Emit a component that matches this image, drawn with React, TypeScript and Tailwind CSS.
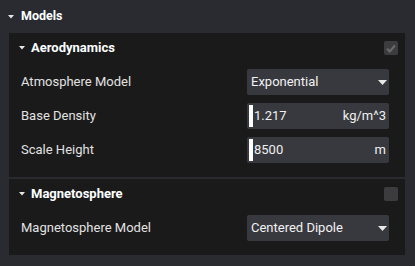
const Arrow = () => (
  <svg width="6" height="4" viewBox="0 0 6 4" className="shrink-0">
    <polygon points="0,0 6,0 3,3.5" fill="#e6e6e6" />
  </svg>
);

const Caret = () => (
  <svg width="9" height="5" viewBox="0 0 9 5" className="shrink-0">
    <polygon points="0,0 9,0 4.5,5" fill="#e8e8e8" />
  </svg>
);

const Check = ({ checked }: { checked: boolean }) => (
  <div className="w-[14px] h-[14px] rounded-[2px] bg-[#3c3c3f] flex items-center justify-center">
    {checked && (
      <svg width="10" height="9" viewBox="0 0 10 9">
        <polyline
          points="1,4.8 3.8,7.4 9,1.4"
          fill="none"
          stroke="#6a6a6c"
          strokeWidth="2.2"
        />
      </svg>
    )}
  </div>
);

const Select = ({ value }: { value: string }) => (
  <div className="w-[142px] h-[26px] bg-[#38393e] rounded-[2px] flex items-center justify-between pl-[4px] pr-[2px] text-[13px] text-[#f2f2f2]">
    {value}
    <Caret />
  </div>
);

const NumField = ({ value, unit }: { value: string; unit: string }) => (
  <div className="w-[142px] h-[26px] bg-[#38393e] rounded-[2px] flex items-center pl-[2px] pr-[3px] text-[13px] text-[#f0f0f0]">
    <div className="w-[4px] h-[22px] bg-white" />
    <span className="ml-[1px]">{value}</span>
    <span className="ml-auto">{unit}</span>
  </div>
);

const Row = ({ label, children }: { label: string; children: React.ReactNode }) => (
  <div className="h-[26px] flex items-center justify-between pl-[12px] pr-[16px]">
    <span className="text-[13px] text-[#e2e2e2]">{label}</span>
    {children}
  </div>
);

const Section = ({
  title,
  checked,
  children,
}: {
  title: string;
  checked: boolean;
  children: React.ReactNode;
}) => (
  <div className="bg-[#1a1a1a] pb-[14px]">
    <div className="h-[30px] flex items-center pl-[10px] pr-[7px]">
      <Arrow />
      <span className="ml-[6px] text-[13px] font-bold text-white">{title}</span>
      <div className="ml-auto">
        <Check checked={checked} />
      </div>
    </div>
    <div className="mt-[6px] flex flex-col gap-[8px]">{children}</div>
  </div>
);

export default function App() {
  return (
    <div
      className="w-[415px] h-[266px] bg-[#2a2b30] overflow-hidden"
      style={{ fontFamily: "Roboto, 'Liberation Sans', sans-serif" }}
    >
      <div className="h-[33px] flex items-center pl-[8px]">
        <Arrow />
        <span className="ml-[7px] text-[12.5px] font-bold text-white">Models</span>
      </div>
      <div className="ml-[9px] mr-[10px] flex flex-col gap-[2px]">
        <Section title="Aerodynamics" checked>
          <Row label="Atmosphere Model">
            <Select value="Exponential" />
          </Row>
          <Row label="Base Density">
            <NumField value="1.217" unit="kg/m^3" />
          </Row>
          <Row label="Scale Height">
            <NumField value="8500" unit="m" />
          </Row>
        </Section>
        <Section title="Magnetosphere" checked={false}>
          <Row label="Magnetosphere Model">
            <Select value="Centered Dipole" />
          </Row>
        </Section>
      </div>
    </div>
  );
}
